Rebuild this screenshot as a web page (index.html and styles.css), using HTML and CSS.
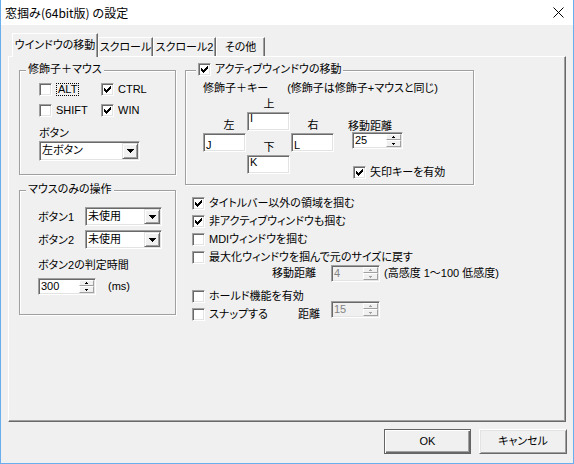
FILE: index.html
```html
<!DOCTYPE html>
<html lang="ja">
<head>
<meta charset="utf-8">
<title>窓掴み(64bit版) の設定</title>
<link rel="stylesheet" href="styles.css">
</head>
<body>
<div class="win">
  <div class="titlebar">
    <span class="title">窓掴み(64bit版) の設定</span>
    <svg class="close" width="11" height="11" viewBox="0 0 11 11"><path d="M0.5 0.5L10.5 10.5M10.5 0.5L0.5 10.5" stroke="#000" stroke-width="1" fill="none"/></svg>
  </div>
  <div class="tabs">
    <div class="tab sel t1">ウインドウの移動</div>
    <div class="tab t2">スクロール</div>
    <div class="tab t3">スクロール2</div>
    <div class="tab t4">その他</div>
  </div>
  <div class="panel">
    <div class="col-left">
      <div class="group g1">
        <span class="legend">修飾子＋マウス</span>
        <div class="cbgrid">
          <div class="chk"><span class="cb"></span><span class="focus">ALT</span></div>
          <div class="chk"><span class="cb"><svg width="11" height="11" viewBox="0 0 11 11"><path d="M2 4H3V5H4V6H5V5H6V4H7V3H8V2H9V5H8V6H7V7H6V8H5V9H4V8H3V7H2Z"/></svg></span><span>CTRL</span></div>
          <div class="chk"><span class="cb"></span><span>SHIFT</span></div>
          <div class="chk"><span class="cb"><svg width="11" height="11" viewBox="0 0 11 11"><path d="M2 4H3V5H4V6H5V5H6V4H7V3H8V2H9V5H8V6H7V7H6V8H5V9H4V8H3V7H2Z"/></svg></span><span>WIN</span></div>
        </div>
        <div class="lbl btnlbl">ボタン</div>
        <div class="combo c1"><span class="val">左ボタン</span><span class="drop"><svg width="7" height="4" viewBox="0 0 7 4"><path d="M0 0H7V1H6V2H5V3H4V4H3V3H2V2H1V1H0Z"/></svg></span></div>
      </div>
      <div class="group g2">
        <span class="legend">マウスのみの操作</span>
        <div class="row">
          <span class="rl">ボタン1</span>
          <div class="combo c2"><span class="val">未使用</span><span class="drop"><svg width="7" height="4" viewBox="0 0 7 4"><path d="M0 0H7V1H6V2H5V3H4V4H3V3H2V2H1V1H0Z"/></svg></span></div>
        </div>
        <div class="row row2">
          <span class="rl">ボタン2</span>
          <div class="combo c2"><span class="val">未使用</span><span class="drop"><svg width="7" height="4" viewBox="0 0 7 4"><path d="M0 0H7V1H6V2H5V3H4V4H3V3H2V2H1V1H0Z"/></svg></span></div>
        </div>
        <div class="lbl judge">ボタン2の判定時間</div>
        <div class="spinrow">
          <div class="spin s58"><span class="val">300</span><span class="ud"><span class="up"></span><span class="dn"></span></span></div>
          <span class="ms">(ms)</span>
        </div>
      </div>
    </div>
    <div class="col-right">
      <div class="group g3">
        <span class="legend lg3"><span class="cb"><svg width="11" height="11" viewBox="0 0 11 11"><path d="M2 4H3V5H4V6H5V5H6V4H7V3H8V2H9V5H8V6H7V7H6V8H5V9H4V8H3V7H2Z"/></svg></span><span>アクティブウィンドウの移動</span></span>
        <div class="hdr">修飾子＋キー<span class="paren">(修飾子は修飾子+マウスと同じ)</span></div>
        <div class="crossrow">
          <div class="cross">
            <span class="ct">上</span>
            <span class="cl">左</span>
            <span class="edit ei">I</span>
            <span class="cr">右</span>
            <span class="edit low ej">J</span>
            <span class="cd">下</span>
            <span class="edit low el">L</span>
            <span class="edit ek">K</span>
          </div>
          <div class="dist">
            <span class="dl">移動距離</span>
            <div class="spin s51"><span class="val">25</span><span class="ud"><span class="up"></span><span class="dn"></span></span></div>
            <div class="chk"><span class="cb"><svg width="11" height="11" viewBox="0 0 11 11"><path d="M2 4H3V5H4V6H5V5H6V4H7V3H8V2H9V5H8V6H7V7H6V8H5V9H4V8H3V7H2Z"/></svg></span><span>矢印キーを有効</span></div>
          </div>
        </div>
      </div>
      <div class="opts">
        <div class="chk"><span class="cb"><svg width="11" height="11" viewBox="0 0 11 11"><path d="M2 4H3V5H4V6H5V5H6V4H7V3H8V2H9V5H8V6H7V7H6V8H5V9H4V8H3V7H2Z"/></svg></span><span>タイトルバー以外の領域を掴む</span></div>
        <div class="chk"><span class="cb"><svg width="11" height="11" viewBox="0 0 11 11"><path d="M2 4H3V5H4V6H5V5H6V4H7V3H8V2H9V5H8V6H7V7H6V8H5V9H4V8H3V7H2Z"/></svg></span><span>非アクティブウィンドウも掴む</span></div>
        <div class="chk"><span class="cb"></span><span>MDIウィンドウを掴む</span></div>
        <div class="chk"><span class="cb"></span><span>最大化ウィンドウを掴んで元のサイズに戻す</span></div>
        <div class="srow">
          <span class="sl">移動距離</span>
          <div class="spin dis s49"><span class="val">4</span><span class="ud"><span class="up"></span><span class="dn"></span></span></div>
          <span class="note">(高感度 1～100 低感度)</span>
        </div>
        <div class="chk hold"><span class="cb"></span><span>ホールド機能を有効</span></div>
        <div class="chk snap"><span class="cb"></span><span class="sn">スナップする</span><span class="sd">距離</span>
          <div class="spin dis s49"><span class="val">15</span><span class="ud"><span class="up"></span><span class="dn"></span></span></div>
        </div>
      </div>
    </div>
  </div>
  <div class="btns">
    <div class="btn ok">OK</div>
    <div class="btn cancel">キャンセル</div>
  </div>
</div>
</body>
</html>
```

FILE: styles.css
```css
* { box-sizing: border-box; }
body {
  margin: 0;
  font: 11px/13px "Liberation Sans", "Noto Sans CJK JP", sans-serif;
  font-feature-settings: "palt";
  color: #000;
  background: #f0f0f0;
}
.win {
  width: 574px;
  height: 464px;
  border: 1px solid #69aff0;
  border-top: 0;
  background: #f0f0f0;
}
.titlebar {
  height: 25px;
  background: #fff;
  display: flex;
  align-items: center;
  justify-content: space-between;
  padding: 0 9px 0 4px;
}
.title {
  font: 12px/16px "Noto Sans CJK JP", sans-serif;
  font-feature-settings: normal;
}
.close { display: block; }

/* tabs */
.tabs {
  display: flex;
  align-items: flex-end;
  height: 23px;
  margin: 8px 0 0 11px;
}
.tab {
  height: 19px;
  border-top: 1px solid #fff;
  border-left: 1px solid #fff;
  border-right: 1px solid #696969;
  box-shadow: inset -1px 0 #a0a0a0;
  display: flex;
  align-items: center;
  justify-content: center;
  white-space: nowrap;
}
.tab.sel {
  height: 24px;
  margin-bottom: -1px;
  padding-bottom: 1px;
  position: relative;
  z-index: 1;
  background: #f0f0f0;
}
.t1 { width: 86px; }
.t2 { width: 55px; }
.t3 { width: 63px; }
.t4 { width: 49px; }

.panel {
  width: 558px;
  height: 366px;
  margin-left: 7px;
  border: 1px solid;
  border-color: #fff #696969 #696969 #fff;
  box-shadow: inset -1px -1px #a0a0a0;
  padding: 13px 0 0 10px;
  display: flex;
  gap: 9px;
  align-items: flex-start;
}
.col-left {
  width: 157px;
  display: flex;
  flex-direction: column;
  gap: 15px;
}
.col-right {
  width: 289px;
  display: flex;
  flex-direction: column;
}

/* group boxes */
.group {
  position: relative;
  border: 1px solid #a0a0a0;
  box-shadow: inset 1px 1px #fff, 1px 1px #fff;
}
.legend {
  position: absolute;
  top: -8px;
  left: 6px;
  padding: 0 2px;
  background: #f0f0f0;
  white-space: nowrap;
  display: flex;
  align-items: center;
  gap: 4px;
}
.lg3 { left: 10px; }
.g1 { height: 105px; padding: 12px 0 0 19px; }
.g2 { height: 125px; padding: 16px 0 0 18px; }
.g3 { height: 115px; padding: 11px 0 0 17px; }

/* checkboxes */
.cbgrid {
  display: grid;
  grid-template-columns: 62px max-content;
  row-gap: 8px;
}
.chk {
  display: flex;
  align-items: center;
  gap: 4px;
  height: 13px;
  white-space: nowrap;
}
.cb {
  width: 13px;
  height: 13px;
  flex: none;
  background: #fff;
  border: 1px solid;
  border-color: #a0a0a0 #fff #fff #a0a0a0;
  box-shadow: inset 1px 1px #696969, inset -1px -1px #e3e3e3;
}
.cb svg { display: block; }
.focus {
  border: 1px dotted #000;
  padding: 0 1px;
  line-height: 11px;
}

.btnlbl { margin-top: 10px; }
.judge { margin-top: 10px; }

/* combo boxes */
.combo {
  display: flex;
  flex: none;
  height: 20px;
  background: #fff;
  border: 1px solid;
  border-color: #a0a0a0 #fff #fff #a0a0a0;
  box-shadow: inset 1px 1px #696969, inset -1px -1px #e3e3e3;
  padding: 1px;
}
.combo .val {
  flex: 1;
  padding-left: 1px;
  line-height: 15px;
  white-space: nowrap;
}
.drop {
  width: 16px;
  flex: none;
  border: 1px solid;
  border-color: #e3e3e3 #696969 #696969 #e3e3e3;
  box-shadow: inset 1px 1px #fff, inset -1px -1px #a0a0a0;
  background: #f0f0f0;
  display: flex;
  align-items: center;
  justify-content: center;
}
.drop svg { display: block; }
.c1 { width: 101px; margin-top: 1px; }
.c2 { width: 77px; height: 19px; }
.c2 .val { line-height: 14px; }

.row { display: flex; align-items: flex-start; }
.row2 { margin-top: 4px; }
.rl { width: 47px; flex: none; padding-top: 4px; white-space: nowrap; }

/* spinners */
.spinrow { display: flex; align-items: center; margin-top: 6px; }
.ms { margin-left: 12px; }
.spin {
  display: flex;
  flex: none;
  height: 17px;
  background: #fff;
  border: 1px solid;
  border-color: #a0a0a0 #fff #fff #a0a0a0;
  box-shadow: inset 1px 1px #696969, inset -1px -1px #e3e3e3;
  padding: 1px;
}
.spin .val { flex: 1; padding-left: 1px; line-height: 13px; }
.spin.dis { background: #f0f0f0; color: #838383; }
.ud { width: 15px; flex: none; display: flex; flex-direction: column; }
.ud span {
  border: 1px solid;
  border-color: #fff #a0a0a0 #a0a0a0 #fff;
  background: #f0f0f0;
  display: flex;
  align-items: center;
  justify-content: center;
  color: #000;
}
.dis .ud span { color: #a0a0a0; }
.ud .up { height: 6px; }
.ud .dn { height: 7px; }
.up::after {
  content: "";
  width: 1px;
  height: 1px;
  margin-top: -1px;
  background: currentColor;
  box-shadow: -1px 1px currentColor, 0 1px currentColor, 1px 1px currentColor;
}
.dn::after {
  content: "";
  width: 1px;
  height: 1px;
  margin-top: 1px;
  background: currentColor;
  box-shadow: -1px -1px currentColor, 0 -1px currentColor, 1px -1px currentColor;
}
.s58 { width: 58px; }
.s51 { width: 51px; }
.s49 { width: 49px; }

/* arrow-key cross */
.hdr { white-space: nowrap; }
.paren { margin-left: 19px; }
.crossrow { display: flex; margin-top: 2px; }
.cross {
  display: grid;
  flex: none;
  grid-template-columns: 44px 44px 44px;
  grid-template-rows: 15px 21px 22px 19px;
}
.ct { grid-area: 1 / 2; text-align: center; line-height: 15px; }
.cl { grid-area: 2 / 1; align-self: end; text-align: center; padding-left: 8px; margin-bottom: 1px; }
.cr { grid-area: 2 / 3; align-self: end; text-align: center; margin-bottom: 1px; }
.cd { grid-area: 3 / 2; align-self: end; text-align: center; margin-bottom: 1px; }
.edit {
  width: 43px;
  height: 19px;
  background: #fff;
  border: 1px solid;
  border-color: #a0a0a0 #fff #fff #a0a0a0;
  box-shadow: inset 1px 1px #696969, inset -1px -1px #e3e3e3;
  padding-left: 2px;
  line-height: 10px;
}
.edit.low { padding-top: 5px; line-height: 13px; }
.ei { grid-area: 2 / 2; }
.ej { grid-area: 3 / 1; }
.el { grid-area: 3 / 3; }
.ek { grid-area: 4 / 2; padding-top: 1px; }
.dist {
  margin-left: 13px;
  margin-top: 23px;
  display: flex;
  flex-direction: column;
  align-items: flex-start;
}
.dl { line-height: 12px; }
.dist .spin { margin-left: 4px; }
.dist .chk { margin-top: 17px; margin-left: 5px; }

/* options list */
.opts {
  padding-left: 7px;
  display: flex;
  flex-direction: column;
}
.opts > * { margin-top: 5px; }
.opts > :first-child { margin-top: 12px; }
.opts > .srow { margin-top: 1px; }
.opts > .hold { margin-top: 8px; }
.srow { display: flex; align-items: center; height: 17px; white-space: nowrap; }
.sl { margin-left: 80px; width: 44px; flex: none; }
.srow .spin { margin-left: 15px; }
.note { margin-left: 4px; }
.snap { align-items: flex-start; height: auto; }
.sn { width: 85px; flex: none; }
.sd { width: 22px; flex: none; }
.snap .spin { margin-top: -7px; margin-left: 7px; }

/* buttons */
.btns {
  display: flex;
  justify-content: flex-end;
  gap: 8px;
  margin-top: 7px;
  padding-right: 6px;
}
.btn {
  height: 25px;
  display: flex;
  align-items: center;
  justify-content: center;
  background: #f0f0f0;
  white-space: nowrap;
}
.ok {
  width: 87px;
  border: 1px solid #646464;
  box-shadow: inset 1px 1px #fff, inset -1px -1px #696969, inset -2px -2px #a0a0a0;
}
.cancel {
  width: 88px;
  border: 1px solid;
  border-color: #fff #696969 #696969 #fff;
  box-shadow: inset 1px 1px #e3e3e3, inset -1px -1px #a0a0a0;
}
```
